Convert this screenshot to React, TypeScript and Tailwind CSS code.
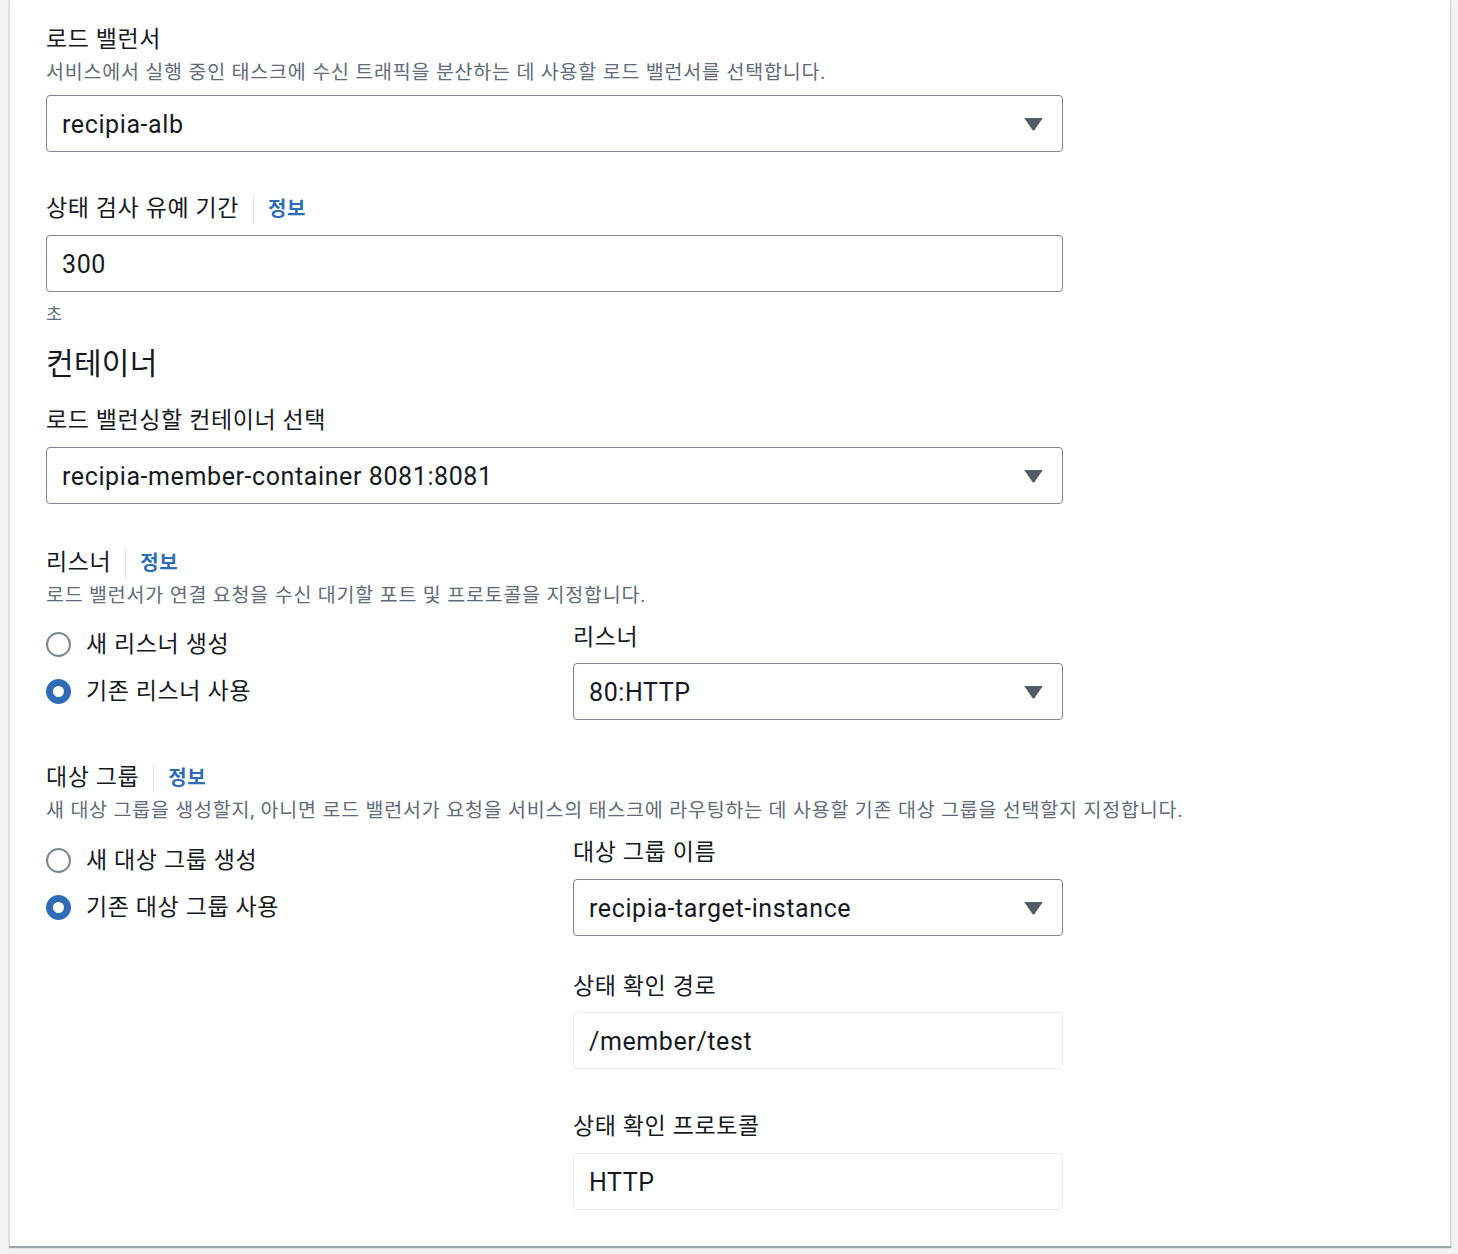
import React from "react";

const FONT = { fontFamily: 'Roboto, "Noto Sans CJK KR", sans-serif' };

function Arrow() {
  return (
    <svg width="19" height="14" viewBox="0 0 19 14" className="shrink-0">
      <path d="M1 1.5 L18 1.5 L10.2 12.8 Q9.5 13.6 8.8 12.8 Z" fill="#545b64" stroke="#545b64" strokeWidth="1" strokeLinejoin="round" />
    </svg>
  );
}

function Select({ value, className = "" }: { value: string; className?: string }) {
  return (
    <div className={`h-[57px] border border-[#7d8590] rounded-[4px] flex items-center justify-between pl-[15px] pr-[19px] bg-white ${className}`}>
      <span className="text-[25px] tracking-[0.6px] text-[#16191f] leading-none pt-[1px]">{value}</span>
      <Arrow />
    </div>
  );
}

function Input({ value, disabled = false, className = "" }: { value: string; disabled?: boolean; className?: string }) {
  return (
    <div
      className={`h-[57px] border rounded-[4px] flex items-center pl-[15px] bg-white ${
        disabled ? "border-[#e9ebed]" : "border-[#7d8590]"
      } ${className}`}
    >
      <span className="text-[25px] tracking-[0.6px] text-[#16191f] leading-none pt-[1px]">{value}</span>
    </div>
  );
}

function Label({ text, info = false, className = "" }: { text: string; info?: boolean; className?: string }) {
  return (
    <div className={`flex items-center h-[32px] pt-[2px] ${className}`}>
      <span className="text-[23px] tracking-[0.6px] leading-[30px] text-[#16191f]">{text}</span>
      {info && (
        <>
          <span className="ml-[14px] mr-[14px] w-px h-[29px] bg-[#e3e6e8]" />
          <span className="text-[20px] tracking-[0.5px] font-bold text-[#2c6db5] leading-[30px]">정보</span>
        </>
      )}
    </div>
  );
}

function Desc({ text, className = "" }: { text: string; className?: string }) {
  return <div className={`text-[19.5px] tracking-[0.8px] leading-[28px] text-[#5f6b7a] whitespace-nowrap ${className}`}>{text}</div>;
}

function Radio({ checked, label }: { checked: boolean; label: string }) {
  return (
    <div className="flex items-center h-[32px]">
      {checked ? (
        <span className="w-[25px] h-[25px] rounded-full border-[7px] border-[#2e6db4] bg-white shrink-0" />
      ) : (
        <span className="w-[25px] h-[25px] rounded-full border-2 border-[#7d8590] bg-white shrink-0" />
      )}
      <span className="ml-[15px] text-[23px] tracking-[0.6px] text-[#16191f] leading-[30px] pt-[2px]">{label}</span>
    </div>
  );
}

export default function App() {
  return (
    <div className="min-h-[1254px] bg-[#f2f3f3] pb-[4px]" style={FONT}>
      <div className="ml-[9px] w-[1442px] bg-white border-l border-r border-[#d5dbdb] shadow-[0_2px_1px_0_rgba(0,28,36,0.35)] pl-[36px] pt-[23px] pb-[36px]">
        <Label text="로드 밸런서" />
        <Desc className="mt-[4px]" text="서비스에서 실행 중인 태스크에 수신 트래픽을 분산하는 데 사용할 로드 밸런서를 선택합니다." />
        <Select className="mt-[8px] w-[1017px]" value="recipia-alb" />

        <Label className="mt-[40px]" text="상태 검사 유예 기간" info />
        <Input className="mt-[11px] w-[1017px]" value="300" />
        <div className="mt-[10px] text-[17.5px] leading-[24px] text-[#5f6b7a]">초</div>

        <div className="mt-[18px] text-[30px] tracking-[0.3px] leading-[40px] text-[#16191f]">컨테이너</div>
        <Label className="mt-[20px]" text="로드 밸런싱할 컨테이너 선택" />
        <Select className="mt-[11px] w-[1017px]" value="recipia-member-container 8081:8081" />

        <Label className="mt-[42px]" text="리스너" info />
        <Desc className="mt-[4px]" text="로드 밸런서가 연결 요청을 수신 대기할 포트 및 프로토콜을 지정합니다." />
        <div className="mt-[11px] flex">
          <div className="w-[527px] pt-[7px] flex flex-col gap-[15px]">
            <Radio checked={false} label="새 리스너 생성" />
            <Radio checked label="기존 리스너 사용" />
          </div>
          <div className="w-[490px]">
            <Label text="리스너" />
            <Select className="mt-[10px]" value="80:HTTP" />
          </div>
        </div>

        <Label className="mt-[41px]" text="대상 그룹" info />
        <Desc className="mt-[4px]" text="새 대상 그룹을 생성할지, 아니면 로드 밸런서가 요청을 서비스의 태스크에 라우팅하는 데 사용할 기존 대상 그룹을 선택할지 지정합니다." />
        <div className="mt-[11px] flex">
          <div className="w-[527px] pt-[8px] flex flex-col gap-[15px]">
            <Radio checked={false} label="새 대상 그룹 생성" />
            <Radio checked label="기존 대상 그룹 사용" />
          </div>
          <div className="w-[490px]">
            <Label text="대상 그룹 이름" />
            <Select className="mt-[11px]" value="recipia-target-instance" />
            <Label className="mt-[34px]" text="상태 확인 경로" />
            <Input className="mt-[10px]" value="/member/test" disabled />
            <Label className="mt-[41px]" text="상태 확인 프로토콜" />
            <Input className="mt-[11px]" value="HTTP" disabled />
          </div>
        </div>
      </div>
    </div>
  );
}
